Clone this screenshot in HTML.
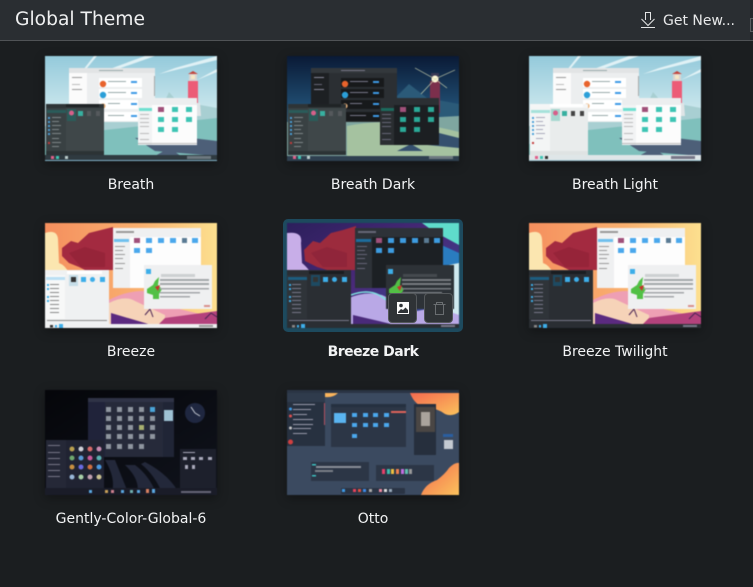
<!DOCTYPE html>
<html><head><meta charset="utf-8"><style>
html,body{margin:0;padding:0;width:753px;height:587px;overflow:hidden;background:#1b1e20}
body{position:relative;font-family:"DejaVu Sans","Liberation Sans",sans-serif;color:#fcfcfc}
.hd{position:absolute;left:0;top:0;width:753px;height:40px;background:#2a2e32;border-bottom:1px solid #505356}
.sb{position:absolute;left:750px;top:0;width:3px;height:40px;background:#24272b}
.sm{position:absolute;left:750px;top:18px;width:4px;height:14px;box-sizing:border-box;background:#2a2e32;border:1px solid #5a5d60}
.t{position:absolute;left:15px;top:8px;font-size:18.7px;line-height:24px;color:#eff0f1}
.g{position:absolute;left:663px;top:12px;font-size:14px;line-height:18px;color:#e8e9ea}
.th{position:absolute;width:172px;height:105px;display:block;box-shadow:0 3px 10px rgba(0,0,0,.35);filter:blur(.5px)}
.l{position:absolute;width:242px;text-align:center;font-size:14px;line-height:18px;color:#f2f3f4}
.sel{position:absolute;left:283px;top:219px;width:180px;height:113px;background:#1d4a5e;border-radius:5px}
.b{position:absolute;top:293px;width:29px;height:30px;box-sizing:border-box;background:#2f3336;border:1px solid #54585b;border-radius:4px}
</style></head><body>
<svg width="0" height="0" style="position:absolute"><defs>
<linearGradient id="sky" x1="0" y1="0" x2="0" y2="1"><stop offset="0" stop-color="#94cadb"/><stop offset=".55" stop-color="#cfe9ee"/><stop offset="1" stop-color="#e6f3f3"/></linearGradient>
<linearGradient id="skyd" x1="0" y1="0" x2="0" y2="1"><stop offset="0" stop-color="#0a1a36"/><stop offset=".45" stop-color="#1f4a6e"/><stop offset="1" stop-color="#6f9a9a"/></linearGradient>
<linearGradient id="warm" x1="0" y1="0" x2="1" y2="0"><stop offset="0" stop-color="#f58f5e"/><stop offset=".55" stop-color="#f9b06f"/><stop offset="1" stop-color="#fde08f"/></linearGradient>
<linearGradient id="cool" x1="0" y1="0" x2="1" y2="1"><stop offset="0" stop-color="#2c1f5c"/><stop offset=".5" stop-color="#4a2a7a"/><stop offset="1" stop-color="#2456a0"/></linearGradient>
<linearGradient id="orn" x1="0" y1="0" x2="1" y2="1"><stop offset="0" stop-color="#f4694f"/><stop offset="1" stop-color="#fbc25c"/></linearGradient>
<linearGradient id="gdk" x1="0" y1="0" x2="1" y2="1"><stop offset="0" stop-color="#05060a"/><stop offset="1" stop-color="#10131c"/></linearGradient>

<symbol id="bl" viewBox="0 0 172 105">
<rect width="172" height="105" fill="url(#sky)"/>
<path d="M42 12L52 0H49L38 14ZM70 14L110 0H100L62 14ZM114 18L172 4V0L130 12ZM152 24L172 16V13Z" fill="#f1fafb" opacity=".8"/>
<path d="M112 62L124 36L136 50L150 48L172 52V105H0V70Z" fill="#a8cfd2"/>
<path d="M60 74L172 62V105H0V88Z" fill="#7fc0bc"/>
<path d="M90 82L130 80L172 85V100L110 95ZM110 100L124 92L136 100Z" fill="#4d5f78"/>
<rect x="143" y="25" width="10" height="22" fill="#ec5c77"/><rect x="144" y="18" width="8" height="7" fill="#d9d4d2"/><path d="M143 18L148 15L153 18Z" fill="#c2473f"/><rect x="146" y="19" width="4" height="4" fill="#f6e7c4"/><path d="M142 47H155L156 60H141Z" fill="#dfe4e6"/>
</symbol>
<symbol id="bd" viewBox="0 0 172 105">
<rect width="172" height="105" fill="url(#skyd)"/>
<path d="M105 45L122 28L140 42L172 48V70L100 66Z" fill="#2b5a78"/>
<path d="M59 66L172 60V105H0V66Z" fill="#7fa6a0"/>
<path d="M60 70Q110 60 172 76V105H60Z" fill="#a5c2a0"/>
<path d="M110 95L124 88L136 95ZM96 80L140 74L172 82V92L130 88Z" fill="#35506e"/>
<rect x="143" y="25" width="10" height="32" fill="#7c2f4c"/><rect x="144" y="17" width="8" height="8" fill="#3a3a55"/><circle cx="148" cy="23" r="3.5" fill="#fff9d8"/><path d="M128 12L148 23L168 14M134 38L148 23L160 32" stroke="#cfd6b0" stroke-width=".6" fill="none"/>
<rect x="0" y="100" width="172" height="5" fill="#2f4050"/>
</symbol>
<symbol id="discL" viewBox="0 0 86 54">
<rect width="86" height="54" fill="#eceeef"/><rect width="86" height="5" fill="#e2e4e5"/><rect x="0" y="5" width="18" height="49" fill="#fbfbfb"/>
<rect x="3" y="9" width="10" height="1" fill="#999"/><rect x="3" y="16" width="8" height="1" fill="#bbb"/><rect x="3" y="21" width="10" height="1" fill="#999"/>
<g fill="#fff"><rect x="30" y="10" width="43" height="9"/><rect x="30" y="21" width="43" height="9"/><rect x="30" y="32" width="43" height="9"/><rect x="30" y="44" width="43" height="9"/></g>
<circle cx="34" cy="16" r="3.2" fill="#e8632c"/><circle cx="34" cy="27" r="3.2" fill="#2b9fd8"/><circle cx="34" cy="38" r="2.6" fill="#eab27c"/>
<g fill="#3d9ae6"><rect x="62" y="13" width="6" height="2"/><rect x="62" y="24" width="6" height="2"/><rect x="62" y="35" width="6" height="2"/><rect x="62" y="47" width="6" height="2"/></g>
<g fill="#9aa"><rect x="39" y="13" width="18" height="1"/><rect x="39" y="24" width="18" height="1"/><rect x="39" y="35" width="12" height="1"/><rect x="39" y="47" width="16" height="1"/><rect x="30" y="2" width="24" height="1"/></g>
<rect x="85" y="8" width="1" height="20" fill="#aaa"/>
</symbol>
<symbol id="discD" viewBox="0 0 86 54">
<rect width="86" height="54" fill="#2b2f33"/><rect width="86" height="5" fill="#33383c"/><rect x="0" y="5" width="18" height="49" fill="#1d2023"/>
<rect x="3" y="9" width="10" height="1" fill="#889"/><rect x="3" y="16" width="8" height="1" fill="#667"/><rect x="3" y="21" width="10" height="1" fill="#889"/>
<g fill="#17191b"><rect x="30" y="10" width="43" height="9"/><rect x="30" y="21" width="43" height="9"/><rect x="30" y="32" width="43" height="9"/><rect x="30" y="44" width="43" height="9"/></g>
<circle cx="34" cy="16" r="3.2" fill="#e8632c"/><circle cx="34" cy="27" r="3.2" fill="#2b9fd8"/><circle cx="34" cy="38" r="2.6" fill="#eab27c"/>
<g fill="#3d9ae6"><rect x="62" y="13" width="6" height="2"/><rect x="62" y="24" width="6" height="2"/><rect x="62" y="35" width="6" height="2"/><rect x="62" y="47" width="6" height="2"/></g>
<g fill="#778"><rect x="39" y="13" width="18" height="1"/><rect x="39" y="24" width="18" height="1"/><rect x="39" y="35" width="12" height="1"/><rect x="39" y="47" width="16" height="1"/><rect x="30" y="2" width="24" height="1"/></g>
</symbol>
<symbol id="folT" viewBox="0 0 59 47">
<rect width="59" height="47" fill="#fcfcfc"/><rect width="59" height="7" fill="#eceeef"/><rect x="0" y="7" width="14" height="40" fill="#f2f3f4"/><rect x="1" y="10" width="13" height="3" fill="#6fe0d0"/>
<rect x="20" y="9" width="6" height="5" fill="#a0507a"/>
<g fill="#3ec5b4"><rect x="34" y="9" width="6" height="5"/><rect x="48" y="9" width="6" height="5"/><rect x="20" y="19" width="6" height="5"/><rect x="34" y="19" width="6" height="5"/><rect x="48" y="19" width="6" height="5"/><rect x="20" y="29" width="6" height="5"/><rect x="34" y="29" width="6" height="5"/></g>
<g fill="#bbb"><rect x="2" y="16" width="9" height="1"/><rect x="2" y="20" width="9" height="1"/><rect x="2" y="24" width="9" height="1"/><rect x="2" y="28" width="9" height="1"/><rect x="2" y="35" width="9" height="1"/><rect x="2" y="41" width="9" height="1"/><rect x="0" y="45" width="59" height="1"/></g>
</symbol>
<symbol id="folTD" viewBox="0 0 59 47">
<rect width="59" height="47" fill="#1c1f22"/><rect width="59" height="7" fill="#2b2f33"/><rect x="0" y="7" width="14" height="40" fill="#2a2e31"/><rect x="1" y="10" width="13" height="3" fill="#1c6a5e"/>
<rect x="20" y="9" width="6" height="5" fill="#a0507a"/>
<g fill="#2aa897"><rect x="34" y="9" width="6" height="5"/><rect x="48" y="9" width="6" height="5"/><rect x="20" y="19" width="6" height="5"/><rect x="34" y="19" width="6" height="5"/><rect x="48" y="19" width="6" height="5"/><rect x="20" y="29" width="6" height="5"/><rect x="34" y="29" width="6" height="5"/></g>
<g fill="#667"><rect x="2" y="16" width="9" height="1"/><rect x="2" y="20" width="9" height="1"/><rect x="2" y="24" width="9" height="1"/><rect x="2" y="28" width="9" height="1"/><rect x="2" y="35" width="9" height="1"/><rect x="2" y="41" width="9" height="1"/></g>
</symbol>
<symbol id="lchD" viewBox="0 0 58 51">
<rect width="58" height="51" fill="#3f4749"/><rect width="58" height="4" fill="#2e3436"/><rect x="20" y="0" width="33" height="3" fill="#1f2325"/><rect x="0" y="4" width="20" height="43" fill="#394143"/><rect x="1" y="6" width="19" height="3" fill="#2a5c5a"/>
<rect x="21" y="5" width="9" height="12" fill="#2a5c5a"/><circle cx="25.500" cy="9" r="2.500" fill="#d6608a"/><rect x="32" y="7" width="5" height="5" fill="#37b0a0"/><rect x="41" y="7" width="4" height="5" fill="#55595c"/><rect x="50" y="7" width="4" height="5" fill="#55595c"/>
<g fill="#4aa0d8"><rect x="2" y="13" width="2" height="2"/><rect x="2" y="17" width="2" height="2"/><rect x="2" y="21" width="2" height="2"/><rect x="2" y="25" width="2" height="2"/><rect x="2" y="29" width="2" height="2"/></g><rect x="2" y="38" width="2" height="2" fill="#c23b3b"/>
<g fill="#7d8587"><rect x="6" y="13" width="9" height="1"/><rect x="6" y="17" width="7" height="1"/><rect x="6" y="21" width="9" height="1"/><rect x="6" y="25" width="7" height="1"/><rect x="6" y="29" width="9" height="1"/><rect x="6" y="34" width="7" height="1"/><rect x="6" y="38" width="9" height="1"/><rect x="6" y="42" width="7" height="1"/></g>
<rect y="47" width="58" height="4" fill="#2c3335"/>
</symbol>
<symbol id="lchL" viewBox="0 0 58 51">
<rect width="58" height="51" fill="#e9ecec"/><rect width="58" height="4" fill="#f5f6f6"/><rect x="20" y="0" width="33" height="3" fill="#fff"/><rect x="0" y="4" width="20" height="43" fill="#f3f5f5"/><rect x="1" y="6" width="19" height="3" fill="#a6e2da"/>
<rect x="21" y="5" width="9" height="12" fill="#a6d8d0"/><circle cx="25.500" cy="9" r="2.500" fill="#d6608a"/><rect x="32" y="7" width="5" height="5" fill="#37b0a0"/><rect x="41" y="7" width="4" height="5" fill="#444"/><rect x="50" y="7" width="4" height="5" fill="#444"/>
<g fill="#4aa0d8"><rect x="2" y="13" width="2" height="2"/><rect x="2" y="17" width="2" height="2"/><rect x="2" y="21" width="2" height="2"/><rect x="2" y="25" width="2" height="2"/><rect x="2" y="29" width="2" height="2"/></g><rect x="2" y="38" width="2" height="2" fill="#c23b3b"/>
<g fill="#aab"><rect x="6" y="13" width="9" height="1"/><rect x="6" y="17" width="7" height="1"/><rect x="6" y="21" width="9" height="1"/><rect x="6" y="25" width="7" height="1"/><rect x="6" y="29" width="9" height="1"/><rect x="6" y="34" width="7" height="1"/></g>
<rect y="47" width="58" height="4" fill="#dfe3e3"/>
</symbol>
<symbol id="brz" viewBox="0 0 172 105">
<rect width="172" height="105" fill="url(#warm)"/>
<path d="M0 10Q12 6 13 16L14 40Q20 42 24 50H0Z" fill="#fbe6b0"/>
<path d="M62 105V78Q80 68 98 68L130 85L172 95V105Z" fill="#ee9fb4"/><path d="M64 80Q80 72 90 78L120 92V105H64Z" fill="#f6d3b8"/><path d="M66 90L100 100L116 105H66Z" fill="#5b2a80"/><path d="M120 95L172 88V105H110Z" fill="#b3427c"/><path d="M100 92L105 86L108 94M160 96L166 90L172 94" stroke="#4a2454" stroke-width="1" fill="none"/>
<path d="M17 25L26 18L33 20L44 10L56 7L68 4V47H40L34 44L24 40L17 33Z" fill="#a32a40"/><path d="M24 30L40 24L60 30V44H36Z" fill="#962439"/>
</symbol>
<symbol id="brzD" viewBox="0 0 172 105">
<rect width="172" height="105" fill="url(#cool)"/>
<path d="M135 0H172V22L146 8Z" fill="#5fdccb"/><path d="M150 20L172 30V60L156 48Z" fill="#2a7cc0"/><path d="M0 10Q16 8 14 20L15 40Q20 44 24 50H0Z" fill="#c8aee8"/>
<path d="M62 105V75Q78 68 95 72L130 88L172 80V105Z" fill="#b9a8e6"/><path d="M64 72Q80 66 92 72L122 92" stroke="#7fe2e2" stroke-width="1.500" fill="none"/><path d="M66 92L100 100L118 105H66Z" fill="#4a2a7a"/><path d="M146 45L172 40V92L150 84Z" fill="#cfe9ef"/>
<path d="M17 27L26 18L33 20L44 10L56 7L69 3V47H40L30 44L18 38Z" fill="#9c2b3d"/><path d="M24 30L40 24L60 30V44H36Z" fill="#90253a"/>
</symbol>
<symbol id="bdolL" viewBox="0 0 88 60">
<rect width="88" height="60" fill="#fdfdfd"/><rect width="88" height="9" fill="#eff0f1"/><rect x="0" y="9" width="17" height="51" fill="#eff0f1"/><rect x="1" y="11" width="15" height="3" fill="#70c0ee"/>
<rect x="21" y="10" width="6" height="5" fill="#a0507a"/><g fill="#4ba8ec"><rect x="33" y="10" width="6" height="5"/><rect x="45" y="10" width="6" height="5"/><rect x="57" y="10" width="6" height="5"/><rect x="69" y="10" width="5" height="5" fill="#5a7b94"/><rect x="79" y="10" width="6" height="5"/><rect x="21" y="20" width="6" height="5"/><rect x="33" y="20" width="6" height="5"/></g>
<g fill="#999"><rect x="2" y="18" width="10" height="1"/><rect x="2" y="22" width="8" height="1"/><rect x="2" y="26" width="10" height="1"/><rect x="2" y="30" width="8" height="1"/><rect x="2" y="35" width="10" height="1"/><rect x="2" y="40" width="8" height="1"/><rect x="3" y="3" width="18" height="2"/></g>
</symbol>
<symbol id="bdolD" viewBox="0 0 88 60">
<rect width="88" height="60" fill="#1c2024"/><rect width="88" height="9" fill="#2d3238"/><rect x="0" y="9" width="17" height="51" fill="#2d3238"/><rect x="1" y="11" width="15" height="3" fill="#1d6d9c"/>
<rect x="21" y="10" width="6" height="5" fill="#a0507a"/><g fill="#3d9be0"><rect x="33" y="10" width="6" height="5"/><rect x="45" y="10" width="6" height="5"/><rect x="57" y="10" width="6" height="5"/><rect x="69" y="10" width="5" height="5" fill="#5a7b94"/><rect x="79" y="10" width="6" height="5"/><rect x="21" y="20" width="6" height="5"/><rect x="33" y="20" width="6" height="5"/></g>
<g fill="#667"><rect x="2" y="18" width="10" height="1"/><rect x="2" y="22" width="8" height="1"/><rect x="2" y="26" width="10" height="1"/><rect x="2" y="30" width="8" height="1"/><rect x="2" y="35" width="10" height="1"/><rect x="2" y="40" width="8" height="1"/><rect x="3" y="3" width="18" height="2"/></g>
</symbol>
<symbol id="aboutL" viewBox="0 0 68 44">
<rect width="68" height="44" fill="#eff0f1"/><rect x="2" y="4" width="5" height="5" fill="#3daee9"/><rect x="17" y="9" width="34" height="3" fill="#cdd0d2"/>
<path d="M3 24L9 20L11 16L15 12L14 20L18 24L15 29L15 34H9V30L3 28Z" fill="#52c045"/><path d="M11 22L16 20L14 26Z" fill="#c8322c"/>
<g fill="#a3a6a9"><rect x="16" y="14" width="49" height="2"/><rect x="16" y="18" width="49" height="2"/><rect x="16" y="23" width="49" height="1.500"/><rect x="16" y="27" width="40" height="1.500"/><rect x="16" y="31" width="30" height="1.500"/></g><rect x="60" y="40" width="6" height="2" fill="#d8908c"/>
</symbol>
<symbol id="aboutD" viewBox="0 0 68 44">
<rect width="68" height="44" fill="#2d3237"/><rect x="2" y="4" width="5" height="5" fill="#3daee9"/><rect x="17" y="9" width="34" height="3" fill="#454a4f"/>
<path d="M3 24L9 20L11 16L15 12L14 20L18 24L15 29L15 34H9V30L3 28Z" fill="#52c045"/><path d="M11 22L16 20L14 26Z" fill="#c8322c"/>
<g fill="#777b80"><rect x="16" y="14" width="49" height="2"/><rect x="16" y="18" width="49" height="2"/><rect x="16" y="23" width="49" height="1.500"/><rect x="16" y="27" width="40" height="1.500"/></g>
</symbol>
<symbol id="blchL" viewBox="0 0 64 54">
<rect width="64" height="54" fill="#eff1f2"/><rect x="22" y="1" width="35" height="3" fill="#fff"/><rect x="0" y="5" width="20" height="44" fill="#f7f8f8"/><rect x="1" y="7" width="19" height="3" fill="#b9dff4"/>
<rect x="24" y="5" width="9" height="11" fill="#c6dde8"/><rect x="26" y="7" width="5" height="5" fill="#333"/><rect x="36" y="7" width="5" height="5" fill="#3daee9"/><circle cx="47.500" cy="9.500" r="2.500" fill="#3daee9"/><rect x="55" y="7" width="5" height="5" fill="#3daee9"/>
<g fill="#888"><rect x="5" y="14" width="9" height="1"/><rect x="5" y="18" width="9" height="1"/><rect x="5" y="22" width="9" height="1"/><rect x="5" y="26" width="9" height="1"/><rect x="5" y="30" width="9" height="1"/><rect x="5" y="34" width="9" height="1"/><rect x="5" y="38" width="9" height="1"/><rect x="5" y="42" width="9" height="1"/><rect x="2" y="50" width="60" height="1"/></g>
<g fill="#3daee9"><rect x="2" y="14" width="2" height="2"/><rect x="2" y="18" width="2" height="2"/><rect x="2" y="26" width="2" height="2"/><rect x="2" y="30" width="2" height="2"/></g>
</symbol>
<symbol id="blchD" viewBox="0 0 64 54">
<rect width="64" height="54" fill="#2a2e33"/><rect x="22" y="1" width="35" height="3" fill="#1a1d20"/><rect x="0" y="5" width="20" height="44" fill="#2f3439"/><rect x="1" y="7" width="19" height="3" fill="#1d5d80"/>
<rect x="24" y="5" width="9" height="11" fill="#1d4a62"/><rect x="26" y="7" width="5" height="5" fill="#333"/><rect x="36" y="7" width="5" height="5" fill="#3daee9"/><circle cx="47.500" cy="9.500" r="2.500" fill="#3daee9"/><rect x="55" y="7" width="5" height="5" fill="#3daee9"/>
<g fill="#778"><rect x="5" y="14" width="9" height="1"/><rect x="5" y="18" width="9" height="1"/><rect x="5" y="22" width="9" height="1"/><rect x="5" y="26" width="9" height="1"/><rect x="5" y="30" width="9" height="1"/><rect x="5" y="34" width="9" height="1"/><rect x="5" y="38" width="9" height="1"/><rect x="5" y="42" width="9" height="1"/><rect x="2" y="50" width="60" height="1"/></g>
<g fill="#3daee9"><rect x="2" y="14" width="2" height="2"/><rect x="2" y="18" width="2" height="2"/><rect x="2" y="26" width="2" height="2"/><rect x="2" y="30" width="2" height="2"/></g>
</symbol>
</defs></svg>

<div class="hd"></div>
<div class="sb"></div><div class="sm"></div>
<div class="t">Global Theme</div>
<svg style="position:absolute;left:640px;top:11px" width="16" height="18" viewBox="0 0 16 18" fill="none" stroke="#e4e5e6" stroke-width="1"><path d="M5.500 9V1.500H10.500V9M1.500 8L8 14.500L14.500 8M1 16.500H15"/></svg>
<div class="g">Get New...</div>

<svg class="th" style="left:45px;top:56px" viewBox="0 0 172 105"><use href="#bl" width="172" height="105"/><use href="#discL" x="24" y="12" width="86" height="54"/><use href="#folT" x="93" y="42" width="59" height="47"/><use href="#lchD" x="1" y="48" width="58" height="51"/><rect y="99" width="172" height="5" fill="#2f3a40"/><rect y="104" width="172" height="1" fill="#7fb0c4"/><rect x="6" y="100" width="3" height="3" fill="#e0608a"/><rect x="11" y="100" width="3" height="3" fill="#3ec5b4"/><rect x="20" y="100" width="3" height="3" fill="#bcc"/><rect x="142" y="100" width="24" height="3" fill="#6d7980"/></svg>
<div class="l" style="left:10px;top:176px">Breath</div>

<svg class="th" style="left:287px;top:56px" viewBox="0 0 172 105"><use href="#bd" width="172" height="105"/><use href="#discD" x="24" y="12" width="86" height="54"/><use href="#folTD" x="93" y="42" width="59" height="47"/><use href="#lchD" x="1" y="48" width="58" height="51"/><rect x="6" y="100" width="3" height="3" fill="#e0608a"/><rect x="11" y="100" width="3" height="3" fill="#3ec5b4"/><rect x="20" y="100" width="3" height="3" fill="#bcc"/><rect x="142" y="100" width="24" height="3" fill="#6d7980"/></svg>
<div class="l" style="left:252px;top:176px">Breath Dark</div>

<svg class="th" style="left:529px;top:56px" viewBox="0 0 172 105"><use href="#bl" width="172" height="105"/><use href="#discL" x="24" y="12" width="86" height="54"/><use href="#folT" x="93" y="42" width="59" height="47"/><use href="#lchL" x="1" y="48" width="58" height="51"/><rect y="99" width="172" height="5" fill="#dfe6e8"/><rect y="104" width="172" height="1" fill="#9cc4d0"/><rect x="6" y="100" width="3" height="3" fill="#e0608a"/><rect x="11" y="100" width="3" height="3" fill="#3ec5b4"/><rect x="16" y="100" width="3" height="3" fill="#333"/><rect x="142" y="100" width="24" height="3" fill="#778"/></svg>
<div class="l" style="left:494px;top:176px">Breath Light</div>

<svg class="th" style="left:45px;top:223px" viewBox="0 0 172 105"><use href="#brz" width="172" height="105"/><use href="#bdolL" x="68" y="5" width="88" height="60"/><use href="#aboutL" x="99" y="42" width="68" height="44"/><use href="#blchL" x="0" y="47" width="64" height="54"/><rect y="101" width="172" height="4" fill="#eff0f1"/><rect x="5" y="102" width="3" height="2.500" fill="#333"/><rect x="10" y="102" width="2" height="2.500" fill="#3daee9"/><rect x="14" y="101" width="4" height="4" fill="#3daee9"/><rect x="154" y="102" width="14" height="2" fill="#999"/></svg>
<div class="l" style="left:10px;top:343px">Breeze</div>

<div class="sel"></div>
<svg class="th" style="left:287px;top:223px;box-shadow:none" viewBox="0 0 172 105"><use href="#brzD" width="172" height="105"/><use href="#bdolD" x="68" y="5" width="88" height="60"/><use href="#aboutD" x="99" y="42" width="68" height="44"/><use href="#blchD" x="0" y="47" width="64" height="54"/><rect y="101" width="172" height="4" fill="#2a2e33"/><rect x="5" y="102" width="3" height="2.500" fill="#888"/><rect x="10" y="102" width="2" height="2.500" fill="#3daee9"/><rect x="14" y="101" width="4" height="4" fill="#3daee9"/><rect x="154" y="102" width="14" height="2" fill="#778"/></svg>
<div class="b" style="left:388px"></div>
<div class="b" style="left:424px"></div>
<svg style="position:absolute;left:397px;top:302px" width="12" height="12" viewBox="0 0 12 12"><rect width="12" height="12" fill="#fcfcfc"/><circle cx="4" cy="3.500" r="1.800" fill="#2f3336"/><path d="M1 10L4 7L6 8L8.500 5.500L11 8V11H1Z" fill="#2f3336"/></svg>
<svg style="position:absolute;left:433px;top:302px" width="13" height="13" viewBox="0 0 13 13" fill="none" stroke="#6a6e71"><path d="M0.500 2.500H12.500M3.500 2.500V0.500H9.500V2.500M2.500 2.500V12.500H10.500V2.500"/></svg>
<div class="l" style="left:252px;top:343px;font-weight:bold;letter-spacing:-.5px">Breeze Dark</div>

<svg class="th" style="left:529px;top:223px" viewBox="0 0 172 105"><use href="#brz" width="172" height="105"/><use href="#bdolL" x="68" y="5" width="88" height="60"/><use href="#aboutL" x="99" y="42" width="68" height="44"/><use href="#blchD" x="0" y="47" width="64" height="54"/><rect y="101" width="172" height="4" fill="#2a2e33"/><rect x="5" y="102" width="3" height="2.500" fill="#888"/><rect x="10" y="102" width="2" height="2.500" fill="#3daee9"/><rect x="14" y="101" width="4" height="4" fill="#3daee9"/><rect x="154" y="102" width="14" height="2" fill="#778"/></svg>
<div class="l" style="left:494px;top:343px">Breeze Twilight</div>

<svg class="th" style="left:45px;top:390px" viewBox="0 0 172 105"><rect width="172" height="105" fill="url(#gdk)"/>
<path d="M60 70Q72 90 66 105H84Q76 85 70 70ZM80 75Q96 90 92 105H112Q104 85 90 75ZM100 72Q125 85 135 105H118Q110 85 96 74Z" fill="#23283a"/>
<rect x="43" y="8" width="86" height="59" fill="#262a3a"/><rect x="43" y="8" width="86" height="4" fill="#2f3346"/><rect x="43" y="12" width="17" height="55" fill="#20233a"/><rect x="118" y="12" width="11" height="55" fill="#202536"/><rect x="119" y="20" width="9" height="11" fill="#9fc2d4"/>
<g fill="#8e959e"><rect x="61" y="17" width="5" height="5"/><rect x="72" y="17" width="5" height="5"/><rect x="83" y="17" width="5" height="5"/><rect x="94" y="17" width="5" height="5"/><rect x="61" y="26" width="5" height="5"/><rect x="72" y="26" width="5" height="5"/><rect x="83" y="26" width="5" height="5"/><rect x="94" y="26" width="5" height="5"/><rect x="105" y="26" width="5" height="5"/><rect x="61" y="35" width="5" height="5"/><rect x="72" y="35" width="5" height="5"/><rect x="83" y="35" width="5" height="5"/><rect x="94" y="35" width="5" height="5" fill="#a8b070"/><rect x="105" y="35" width="5" height="5"/><rect x="61" y="44" width="5" height="5"/><rect x="72" y="44" width="5" height="5"/><rect x="83" y="44" width="5" height="5"/><rect x="94" y="44" width="5" height="5"/><rect x="105" y="44" width="5" height="5"/><rect x="61" y="54" width="5" height="5"/><rect x="72" y="54" width="5" height="5"/><rect x="83" y="54" width="5" height="5"/><rect x="94" y="54" width="5" height="5"/></g><rect x="105" y="17" width="5" height="5" fill="#4aa4d8"/>
<rect x="1" y="50" width="58" height="48" fill="#202332"/><rect x="1" y="50" width="20" height="48" fill="#252837"/>
<g fill="#b9a050"><circle cx="27" cy="59" r="2.500"/></g><circle cx="36" cy="59" r="2.500" fill="#cfd0d8"/><circle cx="45" cy="59" r="2.500" fill="#d86a6a"/><circle cx="54" cy="59" r="2.500" fill="#c78ab0"/><circle cx="27" cy="68" r="2.500" fill="#6fa86f"/><circle cx="36" cy="68" r="2.500" fill="#5a9ad8"/><circle cx="45" cy="68" r="2.500" fill="#c85a9a"/><circle cx="54" cy="68" r="2.500" fill="#5ab0b0"/><circle cx="27" cy="77" r="2.500" fill="#c89040"/><circle cx="36" cy="77" r="2.500" fill="#6a6ae0"/><circle cx="45" cy="77" r="2.500" fill="#d07040"/><circle cx="54" cy="77" r="2.500" fill="#4a9ae0"/><circle cx="27" cy="87" r="2.500" fill="#99b8d8"/><circle cx="36" cy="87" r="2.500" fill="#a8d0a8"/><circle cx="45" cy="87" r="2.500" fill="#c0a0b0"/><circle cx="54" cy="87" r="2.500" fill="#c8c090"/>
<g fill="#778"><rect x="3" y="55" width="12" height="1"/><rect x="3" y="62" width="12" height="1"/><rect x="3" y="68" width="12" height="1"/><rect x="3" y="74" width="12" height="1"/><rect x="3" y="80" width="12" height="1"/><rect x="3" y="86" width="12" height="1"/></g>
<circle cx="150" cy="23" r="10" fill="#1f2740"/><path d="M150 23L146 17M150 23L155 26" stroke="#c8ccd4" stroke-width="1"/>
<rect x="135" y="59" width="36" height="39" fill="#1d202c"/><g fill="#aab"><rect x="138" y="62" width="12" height="1"/><rect x="138" y="67" width="4" height="3"/><rect x="146" y="67" width="4" height="3"/><rect x="154" y="67" width="4" height="3"/><rect x="163" y="67" width="4" height="3"/><rect x="140" y="75" width="3" height="4"/><rect x="147" y="75" width="3" height="4"/></g>
<rect y="98" width="172" height="7" fill="#1a1c28"/><g fill="#5aa8e0"><rect x="44" y="100" width="3" height="3"/><rect x="60" y="100" width="3" height="3" fill="#c8a058"/><rect x="66" y="100" width="3" height="3" fill="#d08090"/><rect x="76" y="100" width="3" height="3"/><rect x="85" y="100" width="3" height="3" fill="#70b0b0"/><rect x="92" y="100" width="3" height="3"/><rect x="101" y="99" width="3" height="4" fill="#d88060"/><rect x="107" y="99" width="3" height="4"/></g><rect x="136" y="101" width="30" height="2" fill="#667"/></svg>
<div class="l" style="left:10px;top:510px">Gently-Color-Global-6</div>

<svg class="th" style="left:287px;top:390px" viewBox="0 0 172 105"><rect width="172" height="105" fill="#3b4a60"/>
<rect width="172" height="3" fill="#2a3444"/>
<path d="M123 3H172V22Q165 27 158 24Q150 18 140 18Q128 16 123 3Z" fill="url(#orn)"/><path d="M38 3H51Q46 8 38 7Z" fill="#f9b45c"/>
<path d="M134 105Q138 94 150 90Q158 84 162 78Q168 72 172 73V105Z" fill="url(#orn)"/>
<rect y="3" width="38" height="53" fill="#273140"/><rect y="3" width="38" height="9" fill="#2f3b4c"/><rect x="37" y="13" width="1" height="22" fill="#b05060"/>
<g fill="#99a"><rect x="6" y="14" width="22" height="1"/><rect x="6" y="19" width="18" height="1"/><rect x="6" y="24" width="14" height="1"/><rect x="6" y="29" width="20" height="1"/><rect x="6" y="34" width="20" height="1"/><rect x="6" y="38" width="18" height="1"/><rect x="6" y="43" width="14" height="1"/></g><circle cx="3.500" cy="19" r="1.500" fill="#3d9ae6"/><circle cx="3.500" cy="26" r="1.500" fill="#e05050"/><circle cx="3.500" cy="38" r="1.500" fill="#c8c8c8"/><circle cx="3.500" cy="52" r="2.500" fill="#d04040"/>
<rect x="44" y="14" width="75" height="43" fill="#2c3646"/><rect x="44" y="14" width="75" height="3" fill="#253040"/>
<rect x="47" y="23" width="12" height="10" fill="#5ab4f0"/>
<g fill="#4ba8ec"><rect x="65" y="23" width="5" height="4"/><rect x="76" y="23" width="5" height="4"/><rect x="86" y="23" width="5" height="4"/><rect x="97" y="23" width="5" height="4"/><rect x="65" y="33" width="5" height="4"/><rect x="76" y="33" width="5" height="4"/><rect x="86" y="33" width="5" height="4"/><rect x="97" y="33" width="5" height="4"/><rect x="65" y="44" width="5" height="4"/></g><rect x="104" y="21" width="15" height="2" fill="#e0635a"/>
<rect x="127" y="14" width="22" height="51" fill="#262f3d"/><rect x="129" y="17" width="19" height="25" fill="#4a4644"/><rect x="134" y="22" width="9" height="14" fill="#aaa39c"/>
<rect x="156" y="44" width="10" height="3" fill="#2a5fa0"/><rect x="157" y="50" width="9" height="9" fill="#c4cad2"/>
<rect x="24" y="72" width="58" height="19" fill="#2c3646"/><rect x="25" y="74" width="4" height="1.500" fill="#3dc0c0"/><rect x="29" y="76" width="45" height="2" fill="#8a8f98"/><rect x="28" y="80" width="18" height="2" fill="#7a7f88"/><rect x="25" y="85" width="4" height="1.500" fill="#3dc0c0"/>
<rect x="89" y="75" width="58" height="16" fill="#2c3646"/><g><rect x="95" y="79" width="3" height="5" fill="#e8406a"/><rect x="100" y="79" width="3" height="5" fill="#3dbfb0"/><rect x="104" y="79" width="3" height="5" fill="#f0c040"/><rect x="109" y="79" width="3" height="5" fill="#f08050"/><rect x="114" y="79" width="3" height="5" fill="#c070e0"/><rect x="118" y="79" width="3" height="5" fill="#60c0b0"/><rect x="122" y="79" width="3" height="5" fill="#999"/></g>
<rect x="54" y="98" width="64" height="6" rx="1" fill="#2a3444"/><g><rect x="55" y="99" width="3" height="3" fill="#3d9ae6"/><rect x="66" y="99" width="3" height="3" fill="#e8405a"/><rect x="71" y="99" width="3" height="3" fill="#e05040"/><rect x="76" y="99" width="3" height="3" fill="#3d8ae6"/><rect x="82" y="99" width="3" height="3" fill="#aaa"/><rect x="92" y="99" width="3" height="3" fill="#f08aa0"/><rect x="97" y="99" width="3" height="3" fill="#ddd"/><rect x="102" y="99" width="3" height="3" fill="#9ab"/></g></svg>
<div class="l" style="left:252px;top:510px">Otto</div>
</body></html>
